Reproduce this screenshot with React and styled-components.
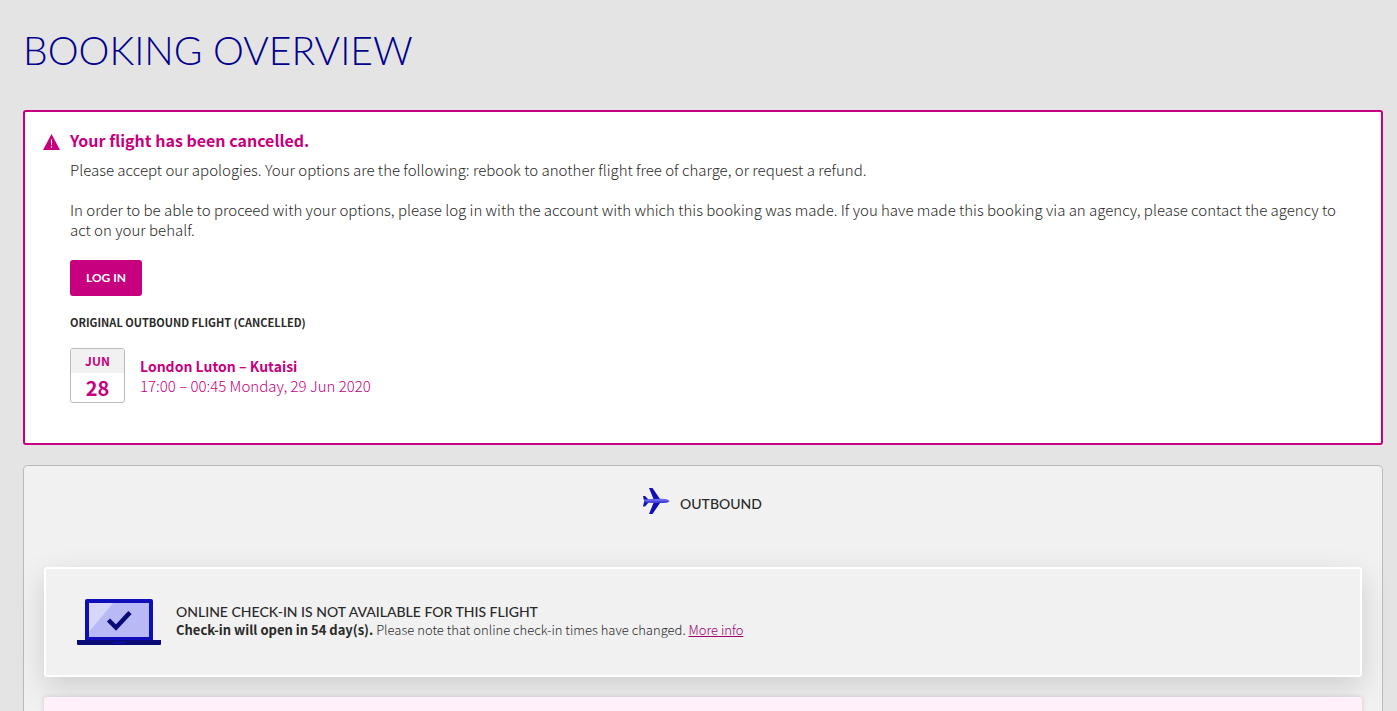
import React from "react";
import styled, { createGlobalStyle } from "styled-components";

const GlobalStyle = createGlobalStyle`
  * {
    box-sizing: border-box;
  }
  body {
    margin: 0;
    background: #e4e4e4;
    color: #2a2a2a;
    font-family: "Noto Sans CJK SC", "Open Sans", sans-serif;
    font-size: 15px;
    font-weight: 300;
    line-height: 20px;
  }
  h1, h2, h3, p {
    margin: 0;
  }
`;

const Page = styled.main`
  padding: 25px 14px 0 23px;
`;

const PageTitle = styled.h1`
  margin-bottom: 35px;
  color: #00008c;
  font-family: Lato, sans-serif;
  font-size: 39px;
  font-weight: 300;
  line-height: 50px;
`;

const Alert = styled.section`
  display: flex;
  align-items: flex-start;
  gap: 10px;
  margin-bottom: 20px;
  padding: 18px 40px 40px 18px;
  border: 2px solid #c6007e;
  border-radius: 3px;
  background: #fff;
`;

const AlertIcon = styled.svg`
  flex: none;
  width: 17px;
  height: 16px;
  margin-top: 4px;
`;

const AlertBody = styled.div`
  flex: 1;
`;

const AlertTitle = styled.h2`
  margin-bottom: 10px;
  color: #c6007e;
  font-size: 16px;
  font-weight: 700;
  line-height: 20px;
`;

const Text = styled.p`
  margin-bottom: 20px;
`;

const LoginButton = styled.button`
  display: block;
  height: 36px;
  margin-bottom: 16px;
  padding: 0 16px 2px;
  border: 0;
  border-radius: 3px;
  background: #c6007e;
  color: #fff;
  font-family: Lato, sans-serif;
  font-size: 12px;
  font-weight: 700;
  cursor: pointer;
`;

const FlightLabel = styled.h3`
  margin-bottom: 16px;
  font-size: 11px;
  font-weight: 700;
  line-height: 20px;
  text-transform: uppercase;
`;

const Flight = styled.div`
  display: flex;
  align-items: center;
  gap: 15px;
  color: #c6007e;
`;

const DateBox = styled.div`
  width: 55px;
  overflow: hidden;
  border: 1px solid #bbb;
  border-radius: 3px;
  font-weight: 700;
  text-align: center;
`;

const Month = styled.div`
  background: #f1f1f1;
  font-size: 12px;
  line-height: 24px;
`;

const Day = styled.div`
  font-size: 20px;
  line-height: 29px;
`;

const Route = styled.strong`
  display: block;
  font-size: 14px;
  font-weight: 700;
`;

const Panel = styled.section`
  padding: 19px 20px 0;
  border: 1px solid #bbb;
  border-bottom: 0;
  border-radius: 5px 5px 0 0;
  background: #f1f1f1;
`;

const PanelHeader = styled.header`
  display: flex;
  align-items: flex-end;
  justify-content: center;
  gap: 8px;
  margin-bottom: 50px;
  padding-right: 4px;
`;

const PlaneIcon = styled.svg`
  width: 32px;
  height: 32px;
`;

const Heading = styled.h3`
  font-family: Lato, sans-serif;
  font-size: 14px;
  font-weight: 500;
  line-height: 18px;
  text-transform: uppercase;
`;

const PanelTitle = styled(Heading)`
  padding-bottom: 4px;
`;

const CheckInCard = styled.div`
  display: flex;
  align-items: center;
  gap: 15px;
  height: 110px;
  margin-bottom: 20px;
  padding: 0 31px;
  border: 2px solid #fff;
  border-radius: 3px;
  background: #f1f1f1;
  box-shadow: 0 10px 30px rgba(0, 0, 0, 0.15);
`;

const CheckInText = styled.div`
  padding-bottom: 2px;
`;

const LaptopIcon = styled.svg`
  flex: none;
  width: 84px;
  height: 48px;
`;

const Note = styled.p`
  font-size: 13px;
  line-height: 18px;

  strong {
    font-weight: 700;
  }
`;

const Link = styled.a`
  color: #a0006e;
`;

const Notice = styled.div`
  height: 40px;
  border-radius: 3px;
  background: #fff0fa;
  box-shadow: 0 0 5px rgba(0, 0, 0, 0.15);
`;

const Clip = styled.div`
  height: 100vh;
  overflow: hidden;
`;

const App = () => {
  return (
    <Clip>
      <GlobalStyle />
      <Page>
        <PageTitle>BOOKING OVERVIEW</PageTitle>
        <Alert>
          <AlertIcon viewBox="0 0 17 16" aria-hidden="true">
            <path fill="#c6007e" d="M8.5 0L17 16H0z" />
            <path fill="#fff" d="M7.900 5.5h1.200L8.900 11.2H8.100z" />
            <circle fill="#fff" cx="8.5" cy="13" r="0.7" />
          </AlertIcon>
          <AlertBody>
            <AlertTitle>Your flight has been cancelled.</AlertTitle>
            <Text>
              Please accept our apologies. Your options are the following:
              rebook to another flight free of charge, or request a refund.
            </Text>
            <Text>
              In order to be able to proceed with your options, please log in
              with the account with which this booking was made. If you have
              made this booking via an agency, please contact the agency to act
              on your behalf.
            </Text>
            <LoginButton type="button">LOG IN</LoginButton>
            <FlightLabel>Original outbound flight (cancelled)</FlightLabel>
            <Flight>
              <DateBox>
                <Month>JUN</Month>
                <Day>28</Day>
              </DateBox>
              <div>
                <Route>London Luton – Kutaisi</Route>
                17:00 – 00:45 Monday, 29 Jun 2020
              </div>
            </Flight>
          </AlertBody>
        </Alert>
        <Panel>
          <PanelHeader>
            <PlaneIcon viewBox="0 0 32 32" aria-hidden="true">
              <path
                fill="#0f0fb4"
                d="M9 3h3.500L20 14v4l-7.500 11H9l4.500-11v-4z"
              />
              <path fill="#0f0fb4" d="M3 11h2l4 4v2l-4 4.500H3l1.200-5z" />
              <path
                fill="#6464eb"
                d="M4 14.500c7-.8 15-1 21-.5 2.500.2 4 1.200 4.500 2-.5.800-2 1.600-4.500 1.800-6 .5-14 .2-21-.8z"
              />
              <path
                fill="#3c3cd7"
                d="M4 16.200h25.400c-.6.700-2 1.400-4.400 1.600-6 .5-14 .2-21-.8z"
              />
            </PlaneIcon>
            <PanelTitle>Outbound</PanelTitle>
          </PanelHeader>
          <CheckInCard>
            <LaptopIcon viewBox="0 0 84 48" aria-hidden="true">
              <path
                fill="#0f0fb9"
                d="M10 1h64a2 2 0 0 1 2 2v40H8V3a2 2 0 0 1 2-2z"
              />
              <path fill="#b9b9f5" d="M12 5h60v34H12z" />
              <path fill="#d7d7fa" d="M12 5h24L12 34z" />
              <path
                fill="none"
                stroke="#0a0a78"
                strokeWidth="4.500"
                d="M31.500 22l7.500 7.500 14-15"
              />
              <path fill="#0a0a78" d="M0 42h84v4a1 1 0 0 1-1 1H1a1 1 0 0 1-1-1z" />
              <path fill="#0f0fb9" d="M36 44h12v1.500H36z" />
            </LaptopIcon>
            <CheckInText>
              <Heading>Online check-in is not available for this flight</Heading>
              <Note>
                <strong>Check-in will open in 54 day(s).</strong> Please note
                that online check-in times have changed.{" "}
                <Link href="#more">More info</Link>
              </Note>
            </CheckInText>
          </CheckInCard>
          <Notice />
        </Panel>
      </Page>
    </Clip>
  );
};

export default App;
